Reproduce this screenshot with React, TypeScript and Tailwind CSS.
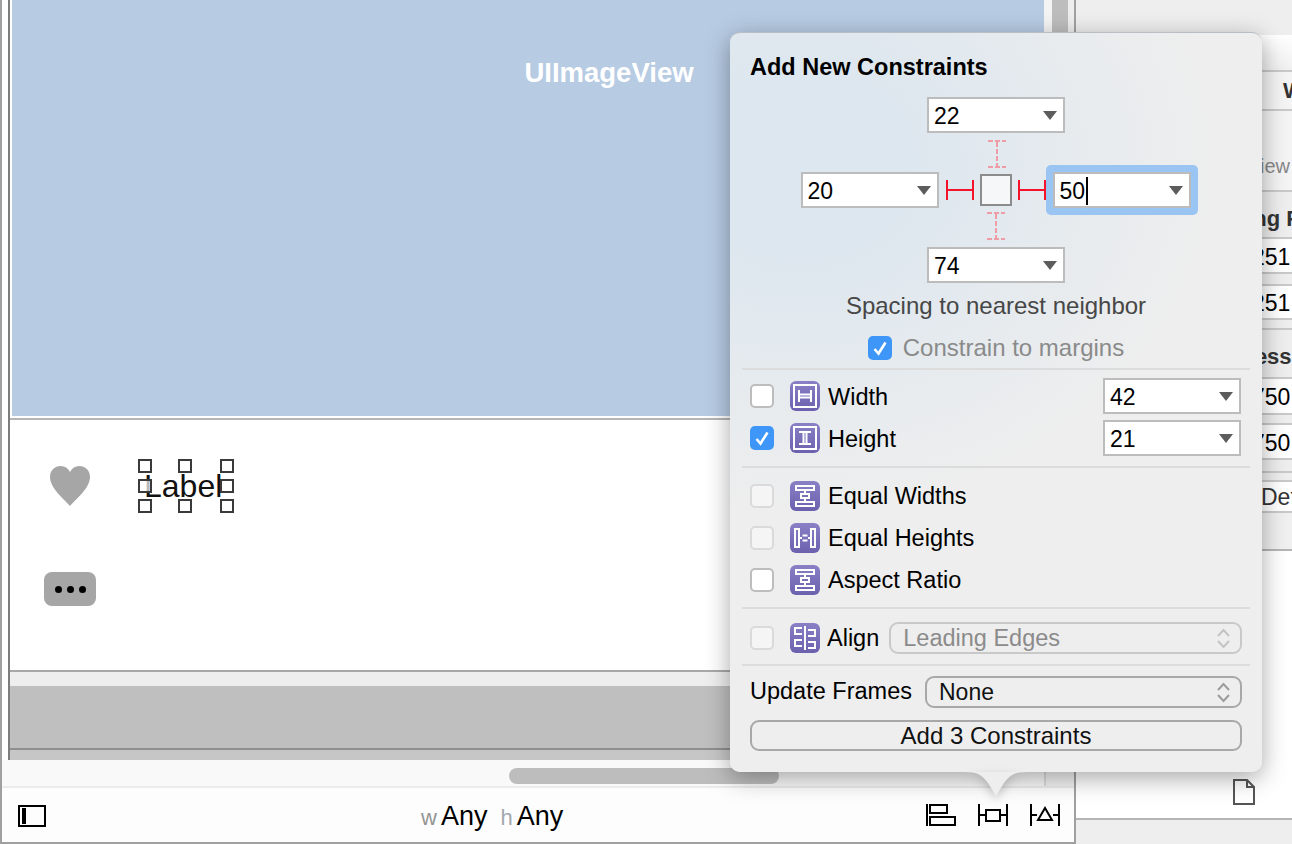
import { ReactNode } from 'react';

function ArrowDown() {
  return (
    <svg width="14" height="9" viewBox="0 0 14 9" className="shrink-0">
      <polygon points="0,0 14,0 7,9" fill="#5c5c5c" />
    </svg>
  );
}

function UpDown({ color }: { color: string }) {
  return (
    <svg width="13" height="21" viewBox="0 0 13 21" fill="none" stroke={color} strokeWidth="2" className="shrink-0">
      <path d="M1 8 L6.5 2 L12 8" />
      <path d="M1 13 L6.5 19 L12 13" />
    </svg>
  );
}

function ComboField({ value, caret }: { value: string; caret?: boolean }) {
  return (
    <div className="flex h-[36px] w-[138px] shrink-0 items-center justify-between border-2 border-[#bcbcbc] bg-white pl-[5px] pr-[6px] text-[23px] text-black">
      <span className="flex items-center pt-[3px]">
        {value}
        {caret && <span className="ml-[1px] inline-block h-[28px] w-[2px] -translate-y-[1px] bg-black" />}
      </span>
      <ArrowDown />
    </div>
  );
}

function Checkbox({ state }: { state: 'on' | 'off' | 'disabled' }) {
  if (state === 'on') {
    return (
      <div className="flex h-[24px] w-[24px] shrink-0 items-center justify-center rounded-[5px] bg-[#3e97f8]">
        <svg width="16" height="16" viewBox="0 0 16 16" fill="none" stroke="white" strokeWidth="2.6">
          <path d="M2.5 9 L6.5 13.5 L13.5 2.5" />
        </svg>
      </div>
    );
  }
  return (
    <div
      className={
        state === 'off'
          ? 'h-[24px] w-[24px] shrink-0 rounded-[5px] border-2 border-[#bdbdbd] bg-white'
          : 'h-[24px] w-[24px] shrink-0 rounded-[5px] border-2 border-[#dadada] bg-[#f5f5f5]'
      }
    />
  );
}

function PurpleIcon({ kind }: { kind: 'width' | 'height' | 'equalW' | 'equalH' | 'align' }) {
  const glyphs: Record<string, ReactNode> = {
    width: (
      <>
        <rect x="4" y="4" width="22" height="22" />
        <path d="M9 9 V21 M21 9 V21 M9 13.5 H21 M9 16.5 H21" />
      </>
    ),
    height: (
      <>
        <rect x="4" y="4" width="22" height="22" />
        <path d="M9 9 H21 M9 21 H21 M13.5 9 V21 M16.5 9 V21" />
      </>
    ),
    equalW: (
      <>
        <rect x="6" y="5" width="18" height="4" />
        <rect x="6" y="21" width="18" height="4" />
        <rect x="11" y="13" width="8" height="4" />
        <path d="M15 9 V13 M15 17 V21" />
      </>
    ),
    equalH: (
      <>
        <rect x="5" y="6" width="4" height="18" />
        <rect x="21" y="6" width="4" height="18" />
        <path d="M12.5 12.5 H17.5 M12.5 17.5 H17.5 M9 15 H12 M18 15 H21" />
      </>
    ),
    align: (
      <>
        <path d="M15 3 V27" />
        <path d="M12 5 H5 V11 H12" />
        <path d="M12 17 H5 V23 H12" />
        <path d="M18 7 H25 V13 H18" />
        <path d="M18 19 H25 V25 H18" />
      </>
    ),
  };
  return (
    <svg width="30" height="30" viewBox="0 0 30 30" className="shrink-0 rounded-[6px] bg-gradient-to-b from-[#8a80c6] to-[#6b61ae]">
      <g fill="none" stroke="white" strokeWidth="2">
        {glyphs[kind]}
      </g>
    </svg>
  );
}

function CheckRow({ state, kind, label, children }: { state: 'on' | 'off' | 'disabled'; kind: 'width' | 'height' | 'equalW' | 'equalH' | 'align'; label: string; children?: ReactNode }) {
  return (
    <div className="flex h-[36px] items-center">
      <Checkbox state={state} />
      <div className="ml-[16px]">
        <PurpleIcon kind={kind} />
      </div>
      <span className={children ? 'ml-[8px] pt-[4px] text-[23.5px] text-black' : 'ml-[8px] pt-[1px] text-[23.5px] text-black'}>{label}</span>
      {children}
    </div>
  );
}

function Separator() {
  return <div className="mx-[-8px] h-[2px] bg-[#dcdcdc]" />;
}

function Strut({ shift }: { shift: string }) {
  return (
    <svg width="20" height="28" viewBox="0 0 20 28" fill="none" stroke="#ee9ca5" strokeWidth="2" strokeDasharray="5 2" className={shift}>
      <path d="M1 1 H19" />
      <path d="M10 2 V26" />
      <path d="M1 27 H19" />
    </svg>
  );
}

function RedBar() {
  return (
    <svg width="28" height="20" viewBox="0 0 28 20" fill="none" stroke="#f5132b" strokeWidth="2" className="shrink-0">
      <path d="M1 0 V20 M27 0 V20 M1 10 H27" />
    </svg>
  );
}

function Popover() {
  return (
    <div className="absolute left-[730px] top-[32px] h-[740px] w-[532px] rounded-[10px] border-t border-[#b9bec4] bg-[#eeeeee] bg-[radial-gradient(ellipse_420px_350px_at_70px_130px,#dde7ef_25%,#eeeeee_100%)] px-[20px] shadow-[0_6px_24px_rgba(0,0,0,0.35)]">
      <div className="mt-[19px] h-[28px] text-[23.5px] font-bold leading-[30px] text-black">Add New Constraints</div>

      <div className="mt-[17px] flex justify-center">
        <ComboField value="22" />
      </div>
      <div className="mt-[7px] flex justify-center">
        <Strut shift="ml-[2px]" />
      </div>
      <div className="ml-[6px] mt-[-3px] flex h-[50px] items-center justify-center gap-[6px]">
        <div className="mr-[1px]">
          <ComboField value="20" />
        </div>
        <RedBar />
        <div className="h-[32px] w-[32px] shrink-0 border-2 border-[#8c8c8c] bg-[#f6f7f8]" />
        <RedBar />
        <div className="ml-[-6px] rounded-[5px] bg-[#9ac4f1] p-[7px]">
          <ComboField value="50" caret />
        </div>
      </div>
      <div className="mt-[-3px] flex justify-center">
        <Strut shift="" />
      </div>
      <div className="mt-[7px] flex justify-center">
        <ComboField value="74" />
      </div>

      <div className="mt-[9px] h-[28px] text-center text-[24px] leading-[28px] text-[#474747]">Spacing to nearest neighbor</div>
      <div className="mt-[14px] flex h-[28px] items-center justify-center gap-[11px]">
        <Checkbox state="on" />
        <span className="text-[24px] text-[#8a8a8a]">Constrain to margins</span>
      </div>

      <div className="mt-[6px]">
        <Separator />
      </div>

      <div className="mt-[8px] flex flex-col gap-[6px]">
        <CheckRow state="off" kind="width" label="Width">
          <div className="ml-auto mr-[1px]">
            <ComboField value="42" />
          </div>
        </CheckRow>
        <CheckRow state="on" kind="height" label="Height">
          <div className="ml-auto mr-[1px]">
            <ComboField value="21" />
          </div>
        </CheckRow>
      </div>

      <div className="mt-[10px]">
        <Separator />
      </div>

      <div className="mt-[10px] flex flex-col gap-[6px]">
        <CheckRow state="disabled" kind="equalW" label="Equal Widths" />
        <CheckRow state="disabled" kind="equalH" label="Equal Heights" />
        <CheckRow state="off" kind="equalW" label="Aspect Ratio" />
      </div>

      <div className="mt-[9px]">
        <Separator />
      </div>

      <div className="mt-[13px] flex h-[32px] items-center">
        <Checkbox state="disabled" />
        <div className="ml-[16px]">
          <PurpleIcon kind="align" />
        </div>
        <span className="ml-[7px] pt-[2px] text-[23.5px] text-black">Align</span>
        <div className="ml-[10px] flex h-[32px] flex-1 items-center justify-between rounded-[9px] border-2 border-[#c9c9c9] pl-[12px] pr-[10px] text-[23.5px] text-[#8b8b8b]">
          <span className="pt-[2px]">Leading Edges</span>
          <UpDown color="#c4c4c4" />
        </div>
      </div>

      <div className="mt-[10px]">
        <Separator />
      </div>

      <div className="mt-[10px] flex h-[32px] items-center justify-between">
        <span className="text-[23.5px] text-black">Update Frames</span>
        <div className="flex h-[32px] w-[317px] items-center justify-between rounded-[9px] border-2 border-[#a8a8a8] pl-[12px] pr-[10px] text-[23px] text-[#111]">
          None
          <UpDown color="#9c9c9c" />
        </div>
      </div>

      <div className="mt-[12px] flex h-[31px] items-center justify-center rounded-[9px] border-2 border-[#a8a8a8] text-[24px] text-[#111]">Add 3 Constraints</div>

      {/* little pointer under the popover */}
      <svg width="64" height="26" viewBox="0 0 64 26" className="absolute left-[234px] top-[739px] drop-shadow-[0_4px_5px_rgba(0,0,0,0.2)]">
        <path d="M0 0 C14 0 18 3 24 11 L32 24 L40 11 C46 3 50 0 64 0 Z" fill="#eeeeee" />
      </svg>
    </div>
  );
}

function Canvas() {
  return (
    <div className="flex h-[760px] bg-white">
      <div className="w-[6px] shrink-0 bg-white" />
      <div className="flex min-w-0 flex-1 border-l-2 border-[#7d7d7d]">
        <div className="flex min-w-0 flex-1 flex-col">
          <div className="pl-[2px]">
            <div className="flex h-[416px] justify-center bg-[#b7cbe3] pt-[56px]">
              <span className="ml-[162px] h-[34px] text-[27.5px] font-bold leading-[34px] text-white">UIImageView</span>
            </div>
          </div>
          <div className="h-[2px] bg-white" />
          <div className="h-[2px] bg-[#b5b5b5]" />
          <div className="h-[250px] bg-white">
            <div className="flex items-center pl-[40px] pt-[46px]">
              <svg width="40" height="40" viewBox="0 0 40 40">
                <path d="M20 40 C13 32 0 22 0 11 C0 4 5 0 10.5 0 C15 0 18 2 20 6 C22 2 25 0 29.5 0 C35 0 40 4 40 11 C40 22 27 32 20 40 Z" fill="#a6a6a6" />
              </svg>
              <div className="relative ml-[54px] h-[40px] w-[78px] text-[32px] leading-[40px] text-[#111]">
                Label
                {[
                  [-6, -7],
                  [34, -7],
                  [76, -7],
                  [-6, 13],
                  [76, 13],
                  [-6, 33],
                  [34, 33],
                  [76, 33],
                ].map(([x, y]) => (
                  <span key={`${x}-${y}`} className="absolute h-[14px] w-[14px] border-2 border-[#3a3a3a] bg-white/70" style={{ left: x, top: y }} />
                ))}
              </div>
            </div>
            <div className="ml-[34px] mt-[66px] flex h-[34px] w-[52px] items-center justify-center gap-[5px] rounded-[8px] bg-[#a6a6a6]">
              <span className="h-[7px] w-[7px] rounded-full bg-black" />
              <span className="h-[7px] w-[7px] rounded-full bg-black" />
              <span className="h-[7px] w-[7px] rounded-full bg-black" />
            </div>
          </div>
          <div className="h-[2px] bg-[#a8a8a8]" />
          <div className="h-[14px] bg-[#eeeeee]" />
          <div className="h-[62px] bg-[#bfbfbf]" />
          <div className="h-[2px] bg-[#8f8f8f]" />
          <div className="h-[10px] bg-[#c6c6c6]" />
        </div>
        <div className="w-[8px] shrink-0 bg-[#f4f4f4]" />
        <div className="w-[16px] shrink-0 bg-[#bdbdbd]" />
        <div className="w-[6px] shrink-0 bg-[#eeeeee]" />
      </div>
    </div>
  );
}

function SizeClass({ letter, letterColor }: { letter: string; letterColor: string }) {
  return (
    <span className="flex items-baseline pt-[3px]">
      <span className={`text-[22px] ${letterColor}`}>{letter}</span>
      <span className="ml-[4px] text-[27px] text-black">Any</span>
    </span>
  );
}

function BottomBar() {
  return (
    <div className="relative flex h-[54px] items-center bg-[#fdfdfd] pl-[16px]">
      <svg width="28" height="22" viewBox="0 0 28 22" fill="none" stroke="black" strokeWidth="2" className="mt-[2px] shrink-0">
        <rect x="1" y="1" width="26" height="20" />
        <rect x="4" y="3" width="4" height="16" fill="black" stroke="none" />
      </svg>
      <div className="ml-[375px] flex gap-[13px]">
        <SizeClass letter="w" letterColor="text-[#949494]" />
        <SizeClass letter="h" letterColor="text-[#a3a8ad]" />
      </div>
      <div className="ml-auto mr-[14px] flex gap-[22px]">
        <svg width="30" height="22" viewBox="0 0 30 22" fill="none" stroke="black" strokeWidth="2">
          <path d="M1 0 V22" />
          <rect x="4" y="1" width="17" height="8" />
          <rect x="4" y="13" width="25" height="8" />
        </svg>
        <svg width="30" height="22" viewBox="0 0 30 22" fill="none" stroke="black" strokeWidth="2">
          <path d="M1 0 V22 M29 0 V22 M1 11 H7 M23 11 H29" />
          <rect x="8" y="6" width="14" height="11" />
        </svg>
        <svg width="30" height="22" viewBox="0 0 30 22" fill="none" stroke="black" strokeWidth="2">
          <path d="M1 0 V22 M29 0 V22 M1 11 H7 M23 11 H29" />
          <polygon points="15,4 22,16 8,16" />
        </svg>
      </div>
    </div>
  );
}

function InspectorRow({ h, text, pl, className }: { h: string; text?: string; pl?: string; className: string }) {
  return (
    <div className={`flex ${h} items-center overflow-hidden whitespace-nowrap ${pl ?? ''} ${className}`}>{text}</div>
  );
}

function Inspector() {
  return (
    <div className="flex h-[842px] min-w-0 flex-1 flex-col bg-[#eeeeee]">
      <div className="h-[35px] shrink-0" />
      <div className="h-[35px] shrink-0 bg-gradient-to-b from-white to-[#f0f0f0]" />
      <InspectorRow h="h-[41px]" text="Width" pl="pl-[207px]" className="shrink-0 border-y-2 border-[#c9c9c9] bg-[#f4f4f4] text-[22px] font-bold text-[#333]" />
      <div className="flex h-[79px] shrink-0 items-end justify-end overflow-hidden whitespace-nowrap bg-[#f4f4f4] pb-[9px] pr-[2px] text-[20px] text-[#888]">View</div>
      <InspectorRow h="h-[49px]" text="Hugging Priority" pl="pl-[115px]" className="shrink-0 border-y-2 border-[#c9c9c9] pt-[8px] text-[22px] font-bold text-[#333]" />
      <InspectorRow h="h-[35px]" text="251" pl="pl-[176px]" className="shrink-0 border-b-2 border-[#c9c9c9] bg-white pt-[3px] text-[23px] text-black" />
      <div className="h-[12px] shrink-0 border-b-2 border-[#c9c9c9]" />
      <InspectorRow h="h-[34px]" text="251" pl="pl-[176px]" className="shrink-0 border-b-2 border-[#c9c9c9] bg-white pt-[2px] text-[23px] text-black" />
      <div className="h-[10px] shrink-0 border-b-2 border-[#c9c9c9]" />
      <InspectorRow h="h-[49px]" text="Compression Resistance" pl="pl-[108px]" className="shrink-0 border-b-2 border-[#c9c9c9] pt-[6px] text-[22px] font-bold text-[#333]" />
      <InspectorRow h="h-[36px]" text="750" pl="pl-[176px]" className="shrink-0 border-b-2 border-[#c9c9c9] bg-white pt-[2px] text-[23px] text-black" />
      <div className="h-[10px] shrink-0 border-b-2 border-[#c9c9c9]" />
      <InspectorRow h="h-[35px]" text="750" pl="pl-[176px]" className="shrink-0 border-b-2 border-[#c9c9c9] bg-white pt-[3px] text-[23px] text-black" />
      <div className="h-[11px] shrink-0" />
      <div className="h-[11px] shrink-0 border-y-2 border-[#c9c9c9]" />
      <InspectorRow h="h-[31px]" text="Default" pl="pl-[185px]" className="shrink-0 border-b-2 border-[#c9c9c9] bg-white pt-[2px] text-[23px] text-[#333]" />
      <div className="h-[38px] shrink-0 border-b-2 border-[#b5b5b5] bg-[#f0f0f0]" />
      <div className="relative h-[269px] shrink-0 border-b-2 border-[#b5b5b5] bg-white">
        <svg width="22" height="26" viewBox="0 0 22 26" fill="none" stroke="#555" strokeWidth="2" className="absolute left-[157px] top-[228px]">
          <path d="M1 1 H14 L21 8 V25 H1 Z M14 1 V8 H21" />
        </svg>
      </div>
    </div>
  );
}

export default function App() {
  return (
    <div className="relative h-[844px] w-[1292px] overflow-hidden bg-[#eeeeee] font-['Liberation_Sans',Arial,sans-serif]">
      <div className="flex">
        <div className="h-[844px] w-[1076px] shrink-0 border-b-2 border-l-2 border-r-2 border-[#a0a0a0]">
          <Canvas />
          <div className="flex h-[28px] border-b-2 border-[#ececec] bg-[#f9f9f9] pl-[507px]">
            <div className="mt-[8px] h-[16px] w-[270px] rounded-full bg-[#bdbdbd]" />
            <div className="ml-auto w-[30px] border-l-2 border-[#dcdcdc] bg-[#f3f3f3]" />
          </div>
          <BottomBar />
        </div>
        <Inspector />
      </div>
      <Popover />
    </div>
  );
}
